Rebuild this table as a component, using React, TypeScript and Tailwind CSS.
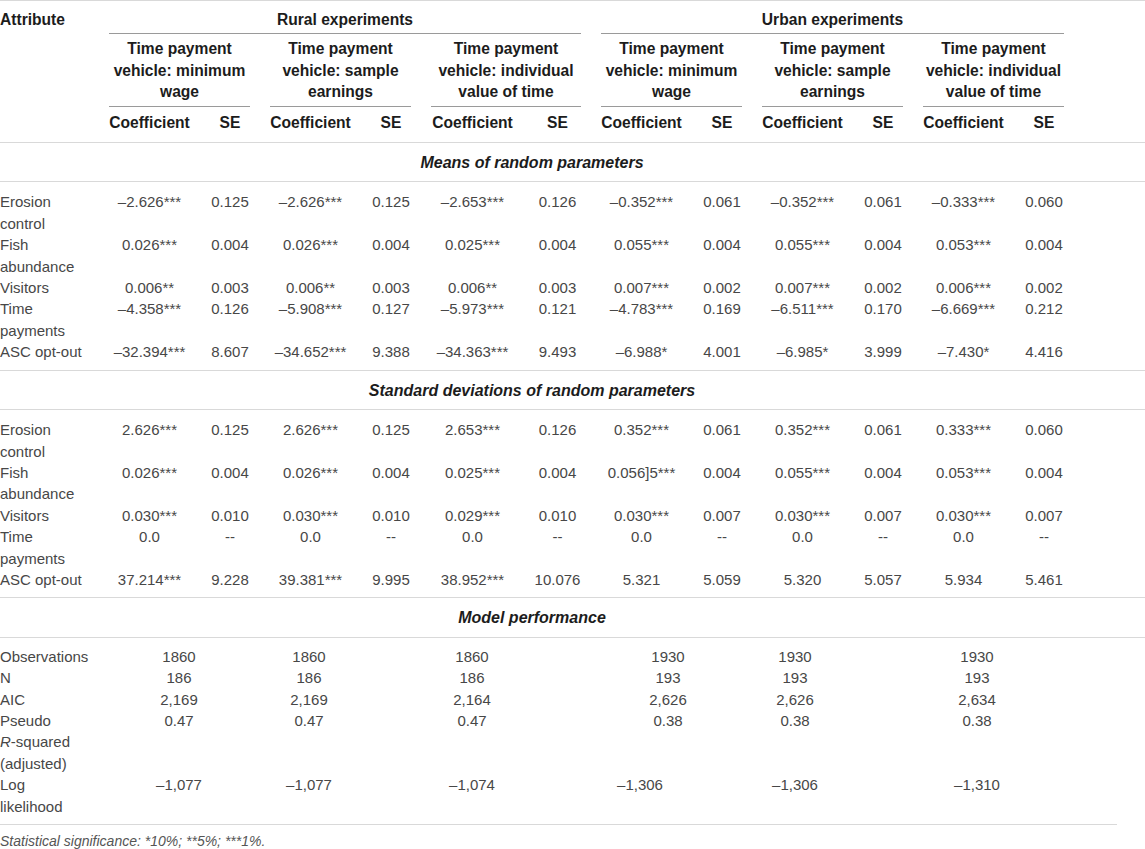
const GRID =
  "grid grid-cols-[99px_101px_60px_101px_60px_103px_67px_101px_60px_101px_60px_101px_60px_1fr]";

type Row = { label: React.ReactNode[]; vals: string[] };

const means: Row[] = [
  { label: ["Erosion", "control"], vals: ["–2.626***", "0.125", "–2.626***", "0.125", "–2.653***", "0.126", "–0.352***", "0.061", "–0.352***", "0.061", "–0.333***", "0.060"] },
  { label: ["Fish", "abundance"], vals: ["0.026***", "0.004", "0.026***", "0.004", "0.025***", "0.004", "0.055***", "0.004", "0.055***", "0.004", "0.053***", "0.004"] },
  { label: ["Visitors"], vals: ["0.006**", "0.003", "0.006**", "0.003", "0.006**", "0.003", "0.007***", "0.002", "0.007***", "0.002", "0.006***", "0.002"] },
  { label: ["Time", "payments"], vals: ["–4.358***", "0.126", "–5.908***", "0.127", "–5.973***", "0.121", "–4.783***", "0.169", "–6.511***", "0.170", "–6.669***", "0.212"] },
  { label: ["ASC opt-out"], vals: ["–32.394***", "8.607", "–34.652***", "9.388", "–34.363***", "9.493", "–6.988*", "4.001", "–6.985*", "3.999", "–7.430*", "4.416"] },
];

const sds: Row[] = [
  { label: ["Erosion", "control"], vals: ["2.626***", "0.125", "2.626***", "0.125", "2.653***", "0.126", "0.352***", "0.061", "0.352***", "0.061", "0.333***", "0.060"] },
  { label: ["Fish", "abundance"], vals: ["0.026***", "0.004", "0.026***", "0.004", "0.025***", "0.004", "0.056]5***", "0.004", "0.055***", "0.004", "0.053***", "0.004"] },
  { label: ["Visitors"], vals: ["0.030***", "0.010", "0.030***", "0.010", "0.029***", "0.010", "0.030***", "0.007", "0.030***", "0.007", "0.030***", "0.007"] },
  { label: ["Time", "payments"], vals: ["0.0", "--", "0.0", "--", "0.0", "--", "0.0", "--", "0.0", "--", "0.0", "--"] },
  { label: ["ASC opt-out"], vals: ["37.214***", "9.228", "39.381***", "9.995", "38.952***", "10.076", "5.321", "5.059", "5.320", "5.057", "5.934", "5.461"] },
];

// model values are not centred the same way in every column of the source
const SHIFT = ["ml-[40px]", "ml-[9px]", "ml-[11px]", "ml-[37px]", "ml-[3px]", "ml-[24px]"];
const SHIFT_LOG = ["ml-[40px]", "ml-[9px]", "ml-[11px]", "ml-[9px]", "ml-[3px]", "ml-[24px]"];

const model: (Row & { shift: string[] })[] = [
  { label: ["Observations"], vals: ["1860", "1860", "1860", "1930", "1930", "1930"], shift: SHIFT },
  { label: ["N"], vals: ["186", "186", "186", "193", "193", "193"], shift: SHIFT },
  { label: ["AIC"], vals: ["2,169", "2,169", "2,164", "2,626", "2,626", "2,634"], shift: SHIFT },
  {
    label: ["Pseudo", <><i>R</i>-squared</>, "(adjusted)"],
    vals: ["0.47", "0.47", "0.47", "0.38", "0.38", "0.38"],
    shift: SHIFT,
  },
  { label: ["Log", "likelihood"], vals: ["–1,077", "–1,077", "–1,074", "–1,306", "–1,306", "–1,310"], shift: SHIFT_LOG },
];

const subHeads = [
  ["Time payment", "vehicle: minimum", "wage"],
  ["Time payment", "vehicle: sample", "earnings"],
  ["Time payment", "vehicle: individual", "value of time"],
  ["Time payment", "vehicle: minimum", "wage"],
  ["Time payment", "vehicle: sample", "earnings"],
  ["Time payment", "vehicle: individual", "value of time"],
];

function Rule() {
  return <div className="h-px bg-[#d9d9d9]" />;
}

function Label({ lines }: { lines: React.ReactNode[] }) {
  return (
    <div className="pr-[10px]">
      {lines.map((l, i) => (
        <div key={i} className="whitespace-nowrap">{l}</div>
      ))}
    </div>
  );
}

function SectionTitle({ children }: { children: React.ReactNode }) {
  return (
    <div className="w-[1064px] pt-[9px] pb-[8px] text-center text-[16px] font-bold italic text-[#1c1c1c]">{children}</div>
  );
}

function DataBlock({ rows }: { rows: Row[] }) {
  return (
    <div className="pt-[9px] pb-[7px]">
      {rows.map((r, i) => (
        <div key={i} className={GRID}>
          <Label lines={r.label} />
          {r.vals.map((v, j) => (
            <div key={j} className="px-[10px] text-center whitespace-nowrap">{v}</div>
          ))}
        </div>
      ))}
    </div>
  );
}

export default function App() {
  return (
    <div className="w-[1145px] h-[849px] overflow-hidden bg-white font-['Liberation_Sans',Arial,sans-serif] text-[15px] leading-[21.4px] text-[#474747]">
      <Rule />

      {/* header */}
      <div className={GRID + " text-[15.6px] font-bold text-[#1c1c1c]"}>
        <div className="pr-[10px] pt-[8px]">Attribute</div>
        <div className="col-span-6 px-[10px] pt-[8px] text-center">
          Rural experiments
          <div className="mt-[3px] border-b border-[#9a9a9a]" />
        </div>
        <div className="col-span-6 px-[10px] pt-[8px] text-center">
          Urban experiments
          <div className="mt-[3px] border-b border-[#9a9a9a]" />
        </div>
      </div>
      <div className={GRID + " text-[15.6px] font-bold text-[#1c1c1c]"}>
        <div />
        {subHeads.map((lines, i) => (
          <div key={i} className="col-span-2 px-[10px] pt-[4px] text-center">
            {lines.map((l, j) => (
              <div key={j} className="whitespace-nowrap">{l}</div>
            ))}
            <div className="mt-[3px] border-b border-[#9a9a9a]" />
          </div>
        ))}
      </div>
      <div className={GRID + " text-[15.6px] font-bold text-[#1c1c1c]"}>
        <div />
        {subHeads.map((_, i) => (
          <div key={i} className="contents">
            <div className="px-[10px] pt-[5px] pb-[9px] text-center">Coefficient</div>
            <div className="px-[10px] pt-[5px] pb-[9px] text-center">SE</div>
          </div>
        ))}
      </div>
      <Rule />

      <SectionTitle>Means of random parameters</SectionTitle>
      <Rule />
      <DataBlock rows={means} />
      <Rule />

      <SectionTitle>Standard deviations of random parameters</SectionTitle>
      <Rule />
      <DataBlock rows={sds} />
      <Rule />

      <SectionTitle>Model performance</SectionTitle>
      <Rule />
      <div className="pt-[8px] pb-[7px]">
        {model.map((r, i) => (
          <div key={i} className={GRID}>
            <Label lines={r.label} />
            {r.vals.map((v, j) => (
              <div key={j} className="col-span-2 px-[10px]">
                <div className={"w-[60px] text-center whitespace-nowrap " + r.shift[j]}>{v}</div>
              </div>
            ))}
          </div>
        ))}
      </div>
      <div className="w-[1117px] h-px bg-[#d9d9d9]" />

      <p className="pt-[6px] text-[14px] leading-[20px] italic text-[#555]">
        Statistical significance: *10%; **5%; ***1%.
      </p>
    </div>
  );
}
